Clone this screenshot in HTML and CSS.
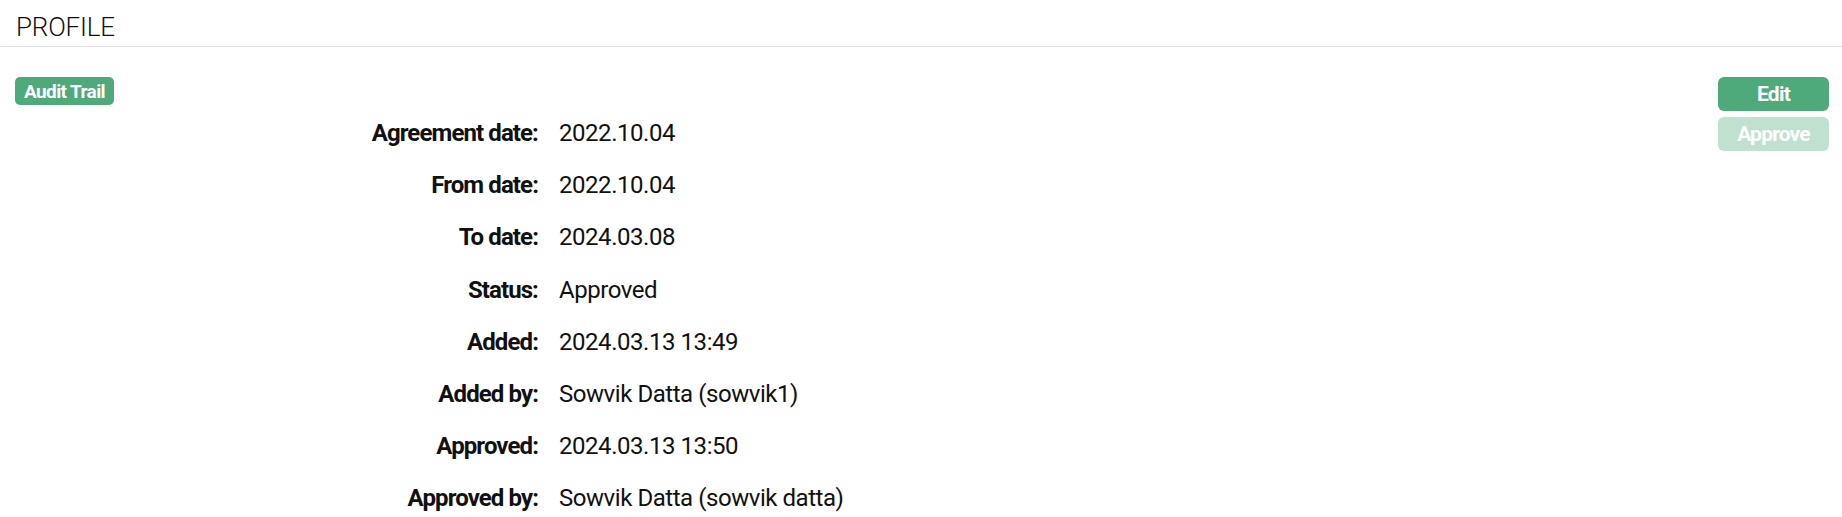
FILE: index.html
```html
<!DOCTYPE html>
<html lang="en">
<head>
<meta charset="utf-8">
<title>Profile</title>
<link rel="stylesheet" href="styles.css">
</head>
<body>
<header class="page-header">
  <h1 class="page-title">PROFILE</h1>
</header>
<main class="profile">
  <section class="profile-main">
    <button class="btn btn-small" type="button">Audit Trail</button>
    <dl class="details">
      <div class="row"><dt>Agreement date:</dt><dd>2022.10.04</dd></div>
      <div class="row"><dt>From date:</dt><dd>2022.10.04</dd></div>
      <div class="row"><dt>To date:</dt><dd>2024.03.08</dd></div>
      <div class="row"><dt>Status:</dt><dd>Approved</dd></div>
      <div class="row"><dt>Added:</dt><dd>2024.03.13 13:49</dd></div>
      <div class="row"><dt>Added by:</dt><dd>Sowvik Datta (sowvik1)</dd></div>
      <div class="row"><dt>Approved:</dt><dd>2024.03.13 13:50</dd></div>
      <div class="row"><dt>Approved by:</dt><dd>Sowvik Datta (sowvik datta)</dd></div>
    </dl>
  </section>
  <aside class="actions">
    <button class="btn btn-action" type="button">Edit</button>
    <button class="btn btn-action btn-disabled" type="button" disabled>Approve</button>
  </aside>
</main>
</body>
</html>
```

FILE: styles.css
```css
html, body {
  margin: 0;
  padding: 0;
  background: #ffffff;
}

body {
  font-family: "Roboto", "Liberation Sans", sans-serif;
  color: #111111;
}

.page-header {
  height: 47px;
  box-sizing: border-box;
  padding: 14px 16px 0 16px;
  border-bottom: 1px solid #e2e2e2;
}

.page-title {
  margin: 0;
  font-family: "Roboto", "Liberation Sans", sans-serif;
  font-weight: 300;
  font-size: 26px;
  line-height: 26px;
  color: #111111;
  letter-spacing: -0.2px;
}

.profile {
  display: flex;
  justify-content: space-between;
  align-items: flex-start;
  padding: 30px 13px 0 15px;
}

.profile-main {
  display: flex;
  flex-direction: column;
  align-items: flex-start;
}

.btn {
  font-family: "Roboto", "Liberation Sans", sans-serif;
  font-weight: 700;
  color: #ffffff;
  background: #4ea97b;
  border: none;
  padding: 0;
  display: inline-flex;
  align-items: center;
  justify-content: center;
  cursor: pointer;
}

.btn-small {
  width: 99px;
  height: 28px;
  border-radius: 5px;
  font-size: 19px;
  letter-spacing: -0.6px;
}

.details {
  margin: 2px 0 0 0;
  display: grid;
  grid-template-columns: 523px auto;
  grid-auto-rows: 52.2px;
  column-gap: 21px;
}

.row {
  display: contents;
}

.details dt {
  font-weight: 700;
  font-size: 24px;
  letter-spacing: -0.9px;
  text-align: right;
  align-self: center;
  color: #111111;
}

.details dd {
  margin: 0;
  font-size: 24px;
  letter-spacing: -0.45px;
  align-self: center;
  color: #111111;
}

.actions {
  display: flex;
  flex-direction: column;
  gap: 6px;
}

.btn-action {
  width: 111px;
  height: 34px;
  border-radius: 6px;
  font-size: 21px;
  letter-spacing: -0.8px;
}

.btn-disabled {
  opacity: 0.35;
  cursor: default;
}
```
